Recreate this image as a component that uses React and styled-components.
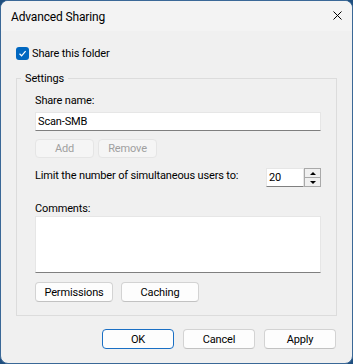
import React from "react";
import styled, { createGlobalStyle } from "styled-components";

const Global = createGlobalStyle`
  html, body { margin: 0; padding: 0; background: #1f4f7f; }
  body { width: 353px; height: 364px; overflow: hidden; }
  * { box-sizing: border-box; }
`;

const FONT = `Roboto, "Liberation Sans", Arial, sans-serif`;

const Window = styled.div`
  width: 353px;
  height: 364px;
  border: 1px solid #3a6897;
  border-radius: 8px;
  overflow: hidden;
  background: #f0f0f0;
  display: flex;
  flex-direction: column;
  font-family: ${FONT};
  font-size: 11px;
  letter-spacing: -0.15px;
  color: #000;
`;

const TitleBar = styled.div`
  height: 30px;
  flex: none;
  padding: 1px 10px 0 10px;
  background: #f3f3f3;
  display: flex;
  align-items: center;
  justify-content: space-between;
`;

const Title = styled.div`
  font-size: 12px;
  line-height: 16px;
`;

const CloseIcon = styled.svg`
  width: 9px;
  height: 9px;
  margin-bottom: 2px;
  display: block;
`;

const Body = styled.div`
  flex: 1;
  padding: 15px 15px 0 15px;
  display: flex;
  flex-direction: column;
`;

const CheckRow = styled.label`
  display: flex;
  align-items: center;
  gap: 3px;
  height: 15px;
  line-height: 15px;
`;

const CheckBox = styled.span`
  width: 13px;
  height: 13px;
  border-radius: 3px;
  background: #0067c0;
  display: flex;
  align-items: center;
  justify-content: center;
  flex: none;
`;

const Group = styled.fieldset`
  margin: 10px 0 0 0;
  padding: 7px 0 13px 4px;
  border: 1px solid #dcdcdc;
  min-width: 0;
`;

const Legend = styled.legend`
  padding: 0 4px;
  line-height: 15px;
`;

const GroupInner = styled.div`
  padding: 0 15px 0 14px;
  display: flex;
  flex-direction: column;
`;

const Label = styled.div`
  line-height: 15px;
  margin-top: ${(p) => p.$mt || 0}px;
`;

const TextInput = styled.input`
  display: block;
  width: ${(p) => (p.$w ? `${p.$w}px` : "100%")};
  height: 19px;
  margin-top: ${(p) => p.$mt || 0}px;
  padding: 0 2px;
  border: 1px solid #e6e6e6;
  border-bottom-color: #7f7f7f;
  background: #fff;
  font-family: ${FONT};
  font-size: 11px;
  letter-spacing: -0.15px;
  line-height: 15px;
  color: #000;
  outline: none;
`;

const TextArea = styled.textarea`
  display: block;
  width: 100%;
  height: 57px;
  padding: 2px;
  border: 1px solid #e6e6e6;
  border-bottom-color: #7f7f7f;
  background: #fff;
  resize: none;
  font-family: ${FONT};
  font-size: 11px;
  outline: none;
`;

const ButtonRow = styled.div`
  display: flex;
  gap: ${(p) => p.$gap}px;
  margin-top: ${(p) => p.$mt}px;
  justify-content: ${(p) => (p.$end ? "flex-end" : "flex-start")};
  padding-right: ${(p) => (p.$end ? 1 : 0)}px;
`;

const Button = styled.button`
  width: ${(p) => p.$w}px;
  height: ${(p) => p.$h}px;
  padding: 0;
  border-radius: 4px;
  font-family: ${FONT};
  font-size: 11px;
  letter-spacing: -0.15px;
  line-height: 15px;
  background: ${(p) => (p.disabled ? "#f5f5f5" : "#fdfdfd")};
  color: ${(p) => (p.disabled ? "#a0a0a0" : "#000")};
  border: 1px solid
    ${(p) => (p.$primary ? "#1a6fc4" : p.disabled ? "#e5e5e5" : "#d3d3d3")};
  border-bottom-color: ${(p) =>
    p.$primary ? "#1a6fc4" : p.disabled ? "#e5e5e5" : "#c2c2c2"};
`;

const LimitRow = styled.div`
  display: flex;
  justify-content: space-between;
  align-items: flex-start;
  margin-top: 10px;
`;

const Spin = styled.div`
  display: flex;
  height: 19px;
`;

const SpinButtons = styled.div`
  width: 17px;
  height: 19px;
  border: 1px solid #a9a9a9;
  background: #f0f0f0;
  display: flex;
  flex-direction: column;
`;

const SpinHalf = styled.div`
  flex: 1;
  display: flex;
  align-items: center;
  justify-content: center;
  border-top: ${(p) => (p.$bottom ? "1px solid #a9a9a9" : "none")};
`;

const Arrow = styled.span`
  width: 0;
  height: 0;
  border-left: 3px solid transparent;
  border-right: 3px solid transparent;
  ${(p) =>
    p.$down ? "border-top: 3px solid #000;" : "border-bottom: 3px solid #000;"}
`;

export default function App() {
  return (
    <>
      <Global />
      <Window>
        <TitleBar>
          <Title>Advanced Sharing</Title>
          <CloseIcon viewBox="0 0 9 9">
            <path d="M0.5 0.5 L8.5 8.5 M8.5 0.5 L0.5 8.5" stroke="#000" strokeWidth="1" fill="none" />
          </CloseIcon>
        </TitleBar>
        <Body>
          <CheckRow>
            <CheckBox>
              <svg width="9" height="9" viewBox="0 0 9 9">
                <path d="M1.5 4.8 L3.6 6.8 L7.6 2.2" stroke="#fff" strokeWidth="1.2" fill="none" />
              </svg>
            </CheckBox>
            Share this folder
          </CheckRow>
          <Group>
            <Legend>Settings</Legend>
            <GroupInner>
              <Label>Share name:</Label>
              <TextInput $mt={4} defaultValue="Scan-SMB" />
              <ButtonRow $gap={4} $mt={8}>
                <Button $w={59} $h={19} disabled>Add</Button>
                <Button $w={59} $h={19} disabled>Remove</Button>
              </ButtonRow>
              <LimitRow>
                <Label>Limit the number of simultaneous users to:</Label>
                <Spin>
                  <TextInput $w={38} defaultValue="20" />
                  <SpinButtons>
                    <SpinHalf>
                      <Arrow />
                    </SpinHalf>
                    <SpinHalf $bottom>
                      <Arrow $down />
                    </SpinHalf>
                  </SpinButtons>
                </Spin>
              </LimitRow>
              <Label $mt={14}>Comments:</Label>
              <TextArea />
              <ButtonRow $gap={8} $mt={9}>
                <Button $w={78} $h={20}>Permissions</Button>
                <Button $w={78} $h={20}>Caching</Button>
              </ButtonRow>
            </GroupInner>
          </Group>
          <ButtonRow $gap={9} $mt={13} $end>
            <Button $w={72} $h={20} $primary>OK</Button>
            <Button $w={72} $h={20}>Cancel</Button>
            <Button $w={72} $h={20}>Apply</Button>
          </ButtonRow>
        </Body>
      </Window>
    </>
  );
}
